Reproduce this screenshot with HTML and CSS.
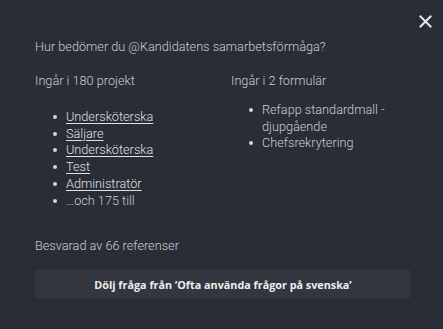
FILE: index.html
```html
<!DOCTYPE html>
<html lang="sv">
<head>
<meta charset="utf-8">
<link rel="stylesheet" href="styles.css">
</head>
<body>
<div class="modal">
  <button class="close" aria-label="Stäng">
    <svg width="13" height="13" viewBox="0 0 13 13"><path d="M1.5 1.5 L11.5 11.5 M11.5 1.5 L1.5 11.5" stroke="#e6e7e9" stroke-width="2" stroke-linecap="square"/></svg>
  </button>
  <p class="question">Hur bedömer du @Kandidatens samarbetsförmåga?</p>
  <div class="cols">
    <div class="col col-left">
      <p class="heading">Ingår i 180 projekt</p>
      <ul class="list list-left">
        <li><a href="#">Undersköterska</a></li>
        <li><a href="#">Säljare</a></li>
        <li><a href="#">Undersköterska</a></li>
        <li><a href="#">Test</a></li>
        <li><a href="#">Administratör</a></li>
        <li>…och 175 till</li>
      </ul>
    </div>
    <div class="col">
      <p class="heading">Ingår i 2 formulär</p>
      <ul class="list">
        <li>Refapp standardmall - djupgående</li>
        <li>Chefsrekrytering</li>
      </ul>
    </div>
  </div>
  <p class="answered">Besvarad av 66 referenser</p>
  <button class="hide-btn">Dölj fråga från ’Ofta använda frågor på svenska’</button>
</div>
</body>
</html>
```

FILE: styles.css
```css
html, body {
  margin: 0;
  padding: 0;
  background: #2a2d35;
}
body {
  width: 443px;
  height: 329px;
  overflow: hidden;
  font-family: Roboto, "Noto Sans", sans-serif;
  font-weight: 300;
  color: #caccd0;
}
.modal {
  position: relative;
  padding: 38px 32px 0 35px;
}
.close {
  position: absolute;
  top: 15px;
  right: 11px;
  width: 13px;
  height: 13px;
  padding: 0;
  border: 0;
  background: none;
  display: block;
}
.close svg { display: block; }
p { margin: 0; }
.question {
  font-size: 12.7px;
  line-height: 17px;
}
.cols {
  display: grid;
  grid-template-columns: 196px 1fr;
  margin-top: 17px;
}
.heading {
  font-size: 12.7px;
  line-height: 17px;
}
.list {
  margin: 13px 0 0 0;
  padding-left: 31px;
  font-size: 12.7px;
  line-height: 16.7px;
  list-style: none;
}
.list-left {
  margin-top: 20px;
}
.list li::before {
  content: "";
  display: inline-block;
  width: 4px;
  height: 4px;
  border-radius: 50%;
  background: #d4d6d9;
  margin-left: -13px;
  margin-right: 9px;
  vertical-align: 2px;
}
.list a {
  color: #dfe1e4;
  text-decoration: underline;
  text-decoration-thickness: 1px;
  text-underline-offset: 2px;
}
.answered {
  font-size: 12.7px;
  line-height: 17px;
  margin-top: 28px;
}
.hide-btn {
  display: block;
  width: 376px;
  height: 28px;
  margin-top: 16px;
  border: 0;
  border-radius: 3px;
  background: #33363f;
  color: #eceef0;
  font-family: "Open Sans", sans-serif;
  font-weight: 700;
  font-size: 10.8px;
  padding: 0;
}
```
